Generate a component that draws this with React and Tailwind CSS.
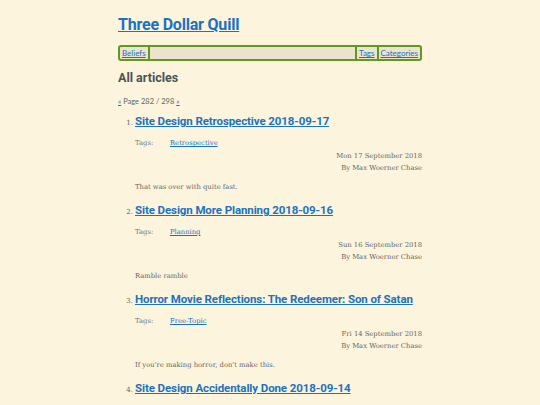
const articles = [
  {
    title: "Site Design Retrospective 2018-09-17",
    tag: "Retrospective",
    date: "Mon 17 September 2018",
    summary: "That was over with quite fast.",
  },
  {
    title: "Site Design More Planning 2018-09-16",
    tag: "Planning",
    date: "Sun 16 September 2018",
    summary: "Ramble ramble",
  },
  {
    title: "Horror Movie Reflections: The Redeemer: Son of Satan",
    tag: "Free-Topic",
    date: "Fri 14 September 2018",
    summary: "If you're making horror, don't make this.",
  },
  {
    // below the fold, only the title shows
    title: "Site Design Accidentally Done 2018-09-14",
  },
];

const head = "font-['Roboto',sans-serif] font-bold";
const body = "font-['DejaVu_Serif',serif]";

export default function App() {
  return (
    <div className="h-[405px] w-full overflow-hidden bg-[#fcf4dc] text-[#5a5a5a]">
      <div className="mx-auto w-[304px] pt-[14px]">
        <h1 className={`${head} text-[16px] leading-[22px] tracking-[-0.2px]`}>
          <a href="#" className="text-[#1a72c4] underline">Three Dollar Quill</a>
        </h1>

        {/* nav bar */}
        <nav className="mt-[9px] flex h-[16px] items-stretch rounded-[3px] border-2 border-[#5f9a1e] bg-[#ebe3cd] font-['Lato',sans-serif] text-[8px] leading-[12px]">
          <a href="#" className="px-[2px] text-[#1a72c4] underline">Beliefs</a>
          <span className="w-[2px] bg-[#5f9a1e]"></span>
          <span className="flex-1"></span>
          <span className="w-[2px] bg-[#5f9a1e]"></span>
          <a href="#" className="px-[2px] text-[#1a72c4] underline">Tags</a>
          <span className="w-[2px] bg-[#5f9a1e]"></span>
          <a href="#" className="px-[2px] text-[#1a72c4] underline">Categories</a>
        </nav>

        <h2 className={`${head} mt-[8px] text-[12.5px] leading-[18px] text-[#4b5359]`}>All articles</h2>

        <p className="mt-[10px] font-['Lato',sans-serif] text-[7.5px] leading-[10px] text-[#666]">
          <a href="#" className="text-[#1a72c4] underline">«</a> Page 282 / 298{" "}
          <a href="#" className="text-[#1a72c4] underline">»</a>
        </p>

        <ol className="mt-[5px]">
          {articles.map((a, i) => (
            <li key={i} className="flex flex-col pb-[8px]">
              <div className="flex items-baseline whitespace-nowrap">
                <span className={`${body} w-[17px] pr-[2px] text-right text-[7px] text-[#666]`}>{i + 1}.</span>
                <a href="#" className={`${head} text-[11.5px] leading-[18px] tracking-[-0.1px] text-[#1a72c4] underline`}>
                  {a.title}
                </a>
              </div>
              {a.tag && (
                <div className={`${body} pl-[17px] text-[6.8px] leading-[12px]`}>
                  <div className="mt-[7px] flex">
                    <span className="w-[35px] text-[#777]">Tags:</span>
                    <a href="#" className="text-[#1a72c4] underline">{a.tag}</a>
                  </div>
                  <div className="mt-[1px] text-right text-[#666]">
                    <div>{a.date}</div>
                    <div>By Max Woerner Chase</div>
                  </div>
                  <p className="mt-[7px] text-[#666]">{a.summary}</p>
                </div>
              )}
            </li>
          ))}
        </ol>
      </div>
    </div>
  );
}
